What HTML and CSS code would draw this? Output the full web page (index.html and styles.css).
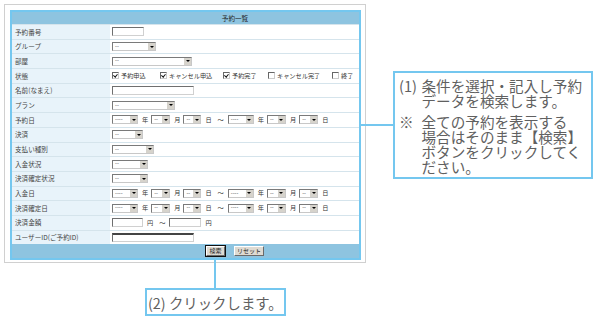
FILE: index.html
```html
<!DOCTYPE html>
<html lang="ja">
<head>
	<meta charset="utf-8">
	<title>予約一覧</title>
	<link rel="stylesheet" href="styles.css">
</head>
<body>
<div class="page">
	<div class="frame">
		<div class="list">
			<div class="head"><span class="title">予約一覧</span></div>
			<div class="row">
				<div class="label">予約番号</div>
				<div class="value"><span class="field w32"></span></div>
			</div>
			<div class="row">
				<div class="label">グループ</div>
				<div class="value"><span class="sel w44">--<b></b></span></div>
			</div>
			<div class="row">
				<div class="label">部屋</div>
				<div class="value"><span class="sel w80">--<b></b></span></div>
			</div>
			<div class="row">
				<div class="label">状態</div>
				<div class="value checks">
					<span class="check"><i class="box on"></i>予約申込</span>
					<span class="check"><i class="box on"></i>キャンセル申込</span>
					<span class="check"><i class="box on"></i>予約完了</span>
					<span class="check"><i class="box"></i>キャンセル完了</span>
					<span class="check"><i class="box"></i>終了</span>
				</div>
			</div>
			<div class="row">
				<div class="label">名前(なまえ)</div>
				<div class="value"><span class="field w82"></span></div>
			</div>
			<div class="row">
				<div class="label">プラン</div>
				<div class="value"><span class="sel w63">--<b></b></span></div>
			</div>
			<div class="row">
				<div class="label">予約日</div>
				<div class="value">
					<span class="sel w26">----<b></b></span><span class="unit">年</span>
					<span class="sel w19">--<b></b></span><span class="unit">月</span>
					<span class="sel w18">--<b></b></span><span class="unit">日</span>
					<span class="wave">～</span>
					<span class="sel w26">----<b></b></span><span class="unit">年</span>
					<span class="sel w19">--<b></b></span><span class="unit">月</span>
					<span class="sel w19">--<b></b></span><span class="unit">日</span>
				</div>
			</div>
			<div class="row">
				<div class="label">決済</div>
				<div class="value"><span class="sel w31">--<b></b></span></div>
			</div>
			<div class="row">
				<div class="label">支払い種別</div>
				<div class="value"><span class="sel w42">--<b></b></span></div>
			</div>
			<div class="row">
				<div class="label">入金状況</div>
				<div class="value"><span class="sel w36">--<b></b></span></div>
			</div>
			<div class="row">
				<div class="label">決済確定状況</div>
				<div class="value"><span class="sel w36">--<b></b></span></div>
			</div>
			<div class="row">
				<div class="label">入金日</div>
				<div class="value">
					<span class="sel w26">----<b></b></span><span class="unit">年</span>
					<span class="sel w19">--<b></b></span><span class="unit">月</span>
					<span class="sel w18">--<b></b></span><span class="unit">日</span>
					<span class="wave">～</span>
					<span class="sel w26">----<b></b></span><span class="unit">年</span>
					<span class="sel w19">--<b></b></span><span class="unit">月</span>
					<span class="sel w19">--<b></b></span><span class="unit">日</span>
				</div>
			</div>
			<div class="row">
				<div class="label">決済確定日</div>
				<div class="value">
					<span class="sel w26">----<b></b></span><span class="unit">年</span>
					<span class="sel w19">--<b></b></span><span class="unit">月</span>
					<span class="sel w18">--<b></b></span><span class="unit">日</span>
					<span class="wave">～</span>
					<span class="sel w26">----<b></b></span><span class="unit">年</span>
					<span class="sel w19">--<b></b></span><span class="unit">月</span>
					<span class="sel w19">--<b></b></span><span class="unit">日</span>
				</div>
			</div>
			<div class="row">
				<div class="label">決済金額</div>
				<div class="value">
					<span class="field w31"></span><span class="unit">円</span><span class="wave">～</span>
					<span class="field w32"></span><span class="unit">円</span>
				</div>
			</div>
			<div class="row">
				<div class="label">ユーザーID(ご予約ID)</div>
				<div class="value"><span class="field w82 thick"></span></div>
			</div>
			<div class="foot">
				<div class="buttons">
					<span class="btn focus">検索</span>
					<span class="btn wide">リセット</span>
				</div>
			</div>
		</div>
	</div>

	<div class="note note-1">
		<div class="item"><span class="mark">(1)</span><span>条件を選択・記入し予約<br>データを検索します。</span></div>
		<div class="item"><span class="mark">※</span><span>全ての予約を表示する<br>場合はそのまま【検索】<br>ボタンをクリックしてく<br>ださい。</span></div>
	</div>
	<div class="line line-h"></div>
	<div class="line line-v"></div>
	<div class="note note-2">(2) クリックします。</div>
</div>
</body>
</html>
```

FILE: styles.css
```css
body {
	margin: 0;
	font-family: "Noto Sans CJK JP", sans-serif;
	color: #333;
	background: #fff;
}
.page {
	position: relative;
	width: 600px;
	height: 323px;
	overflow: hidden;
}
.frame {
	margin: 4px 0 0 4px;
	padding: 5px 0 0 5px;
	width: 355px;
	height: 252px;
	border: 1px solid #d0d0d0;
}
.list {
	width: 347px;
	border: 2px solid #74c7ef;
	display: flex;
	flex-direction: column;
	font-size: 6.6px;
	line-height: 1;
}
.head, .foot {
	display: flex;
	background: #8ec4e0;
}
.head {
	height: 12px;
	align-items: center;
}
.title {
	flex: 1;
	margin-left: 99px;
	text-align: center;
	color: #222;
}
.row {
	display: flex;
	height: 14.7px;
	box-sizing: border-box;
	border-top: 1px solid #d5e4ec;
}
.label {
	width: 99px;
	box-sizing: border-box;
	padding-left: 3px;
	display: flex;
	align-items: center;
	background: #e8f3fa;
	border-right: 1px solid #fff;
	color: #444;
	white-space: nowrap;
}
.value {
	flex: 1;
	display: flex;
	align-items: center;
	padding-left: 1px;
	white-space: nowrap;
}
.checks {
	display: grid;
	grid-template-columns: 48px 63px 45px 64px auto;
	align-items: center;
}
.check {
	display: flex;
	align-items: center;
	font-size: 6.2px;
}
.box {
	width: 7px;
	height: 7px;
	box-sizing: border-box;
	margin-right: 2px;
	display: flex;
	align-items: center;
	justify-content: center;
	border: 1px solid;
	border-color: #666 #ccc #ccc #666;
	background: #fff;
}
.box.on::after {
	content: '';
	width: 1.5px;
	height: 3px;
	margin-top: -1px;
	border: solid #111;
	border-width: 0 1px 1px 0;
	transform: rotate(40deg);
}
.field {
	display: inline-block;
	height: 9px;
	box-sizing: border-box;
	border: 1px solid;
	border-color: #6f6f6f #d0d0d0 #d0d0d0 #6f6f6f;
	background: #fff;
}
.field.thick {
	border-top: 2px solid #444;
}
.sel {
	display: inline-flex;
	align-items: center;
	justify-content: space-between;
	height: 9px;
	box-sizing: border-box;
	padding-left: 2px;
	border: 1px solid;
	border-color: #7a7a7a #c8c8c8 #c8c8c8 #7a7a7a;
	background: #fff;
	font-size: 5.5px;
	color: #333;
}
.sel b {
	width: 7px;
	height: 7px;
	display: flex;
	align-items: center;
	justify-content: center;
	background: #d6d3cc;
}
.sel b::after {
	content: '';
	border-left: 2px solid transparent;
	border-right: 2px solid transparent;
	border-top: 2px solid #000;
}
.w18 { width: 18px; }
.w19 { width: 19px; }
.w26 { width: 26px; }
.w31 { width: 31px; }
.w32 { width: 32px; }
.w36 { width: 36px; }
.w42 { width: 42px; }
.w44 { width: 44px; }
.w63 { width: 63px; }
.w80 { width: 80px; }
.w82 { width: 82px; }
.unit {
	margin: 0 3px 0 4px;
	font-size: 6.2px;
}
.wave {
	margin: 0 4px 0 3px;
	font-size: 6.2px;
}
.foot {
	height: 14px;
}
.buttons {
	flex: 1;
	margin-left: 99px;
	display: flex;
	align-items: center;
	justify-content: center;
	gap: 9px;
}
.btn {
	width: 19px;
	height: 10px;
	box-sizing: border-box;
	display: flex;
	align-items: center;
	justify-content: center;
	font-size: 6px;
	color: #222;
	background: #dedad2;
	border: 1px solid;
	border-color: #fff #6a6a6a #6a6a6a #fff;
}
.btn.focus {
	outline: 1px solid #111;
}
.btn.wide {
	width: 30px;
}
.note {
	position: absolute;
	box-sizing: border-box;
	border: 2px solid #74c7ef;
	background: #fff;
	color: #606060;
	white-space: nowrap;
}
.note-1 {
	left: 393px;
	top: 71px;
	width: 200px;
	height: 108px;
	padding: 5px 0 0 4px;
	font-size: 14.6px;
	line-height: 15.3px;
}
.item {
	display: flex;
}
.item + .item {
	margin-top: 5px;
}
.mark {
	width: 22.5px;
	flex: none;
}
.note-2 {
	left: 145px;
	top: 288px;
	width: 141px;
	height: 28px;
	padding-left: 1px;
	display: flex;
	align-items: center;
	font-size: 14.4px;
}
.line {
	position: absolute;
	background: #74c7ef;
}
.line-h {
	left: 361px;
	top: 124px;
	width: 32px;
	height: 2px;
}
.line-v {
	left: 214px;
	top: 258px;
	width: 2px;
	height: 30px;
}
```
